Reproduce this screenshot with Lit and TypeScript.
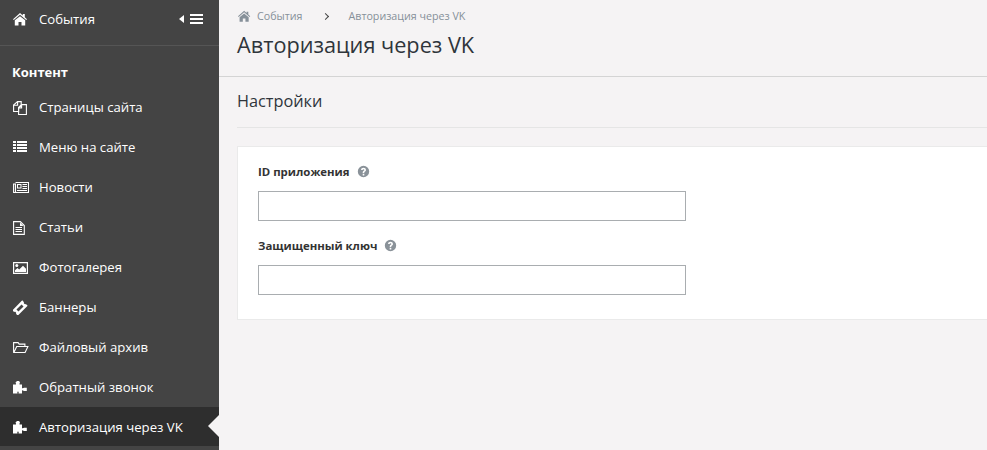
import { LitElement, html, css, svg } from "lit";
import { customElement } from "lit/decorators.js";

const home = svg`<path d="M7 2 0 8.200l.8.9L7 3.800l6.200 5.300.8-.9-2.200-1.900V3H9.800v1.500zM1.800 9.300V14.500h3.700v-3.600h3v3.600h3.700V9.300L7 5.200z"/>`;
const pages = svg`<g fill="none" stroke="currentColor" stroke-width="1.100"><path d="M.6 12.500V6L4.500 2.600h3.700v3.300L5.600 8.500v4z"/><path d="M5.600 8.700 8.800 5.600h4.600v9.900H5.600zM8.600 5.800v3.100H5.800M4.600 2.800v3.500H.8"/></g>`;
const list = svg`<path d="M0 2h3v2H0zM4 2h10v2H4zM0 5h3v2H0zM4 5h10v2H4zM0 8h3v2H0zM4 8h10v2H4zM0 11h3v2H0zM4 11h10v2H4z"/>`;
const news = svg`<g fill="none" stroke="currentColor" stroke-width="1.100"><path d="M2.500 3.500h13v10h-14.900V5h1.900v8"/></g><path fill-rule="evenodd" d="M4 5h4.500v4.500H4zM5 6v2.500h2.500V6z"/><path d="M9.500 5H14v1H9.500zM9.500 7H14v1H9.500zM9.500 9H14v1H9.500zM4 11h10v1H4z"/>`;
const doc = svg`<path fill="none" stroke="currentColor" stroke-width="1.100" d="M.6 2.600h6.700l4 4v8.800H.6z"/><path d="M7 3.500V7h3.500z"/><path d="M2.500 8h6.500v1H2.500zM2.500 10h6.500v1H2.500zM2.500 12h6.500v1H2.500z"/>`;
const pic = svg`<path fill="none" stroke="currentColor" stroke-width="1.200" d="M.6 3.600h13.800v10.800H.6z"/><circle cx="3.800" cy="6.500" r="1.500"/><path d="M2 13v-1.800l2.500-2.200 1.700 1.600L10 6.800l3 3V13z"/>`;
const tag = svg`<g transform="rotate(-45 7 9)"><path fill-rule="evenodd" d="M0 5.200h14v2.500c-.6 0-1 .6-1 1.300s.4 1.300 1 1.300v2.500H0v-2.500c.6 0 1-.6 1-1.300S.6 7.700 0 7.700zM3.400 7.600v2.800h7.200V7.600z"/></g>`;
const folder = svg`<path fill="none" stroke="currentColor" stroke-width="1.100" d="M.6 13.500V3.600h4.500l1.100 1.500h5.700v2.200M.9 13.500l2.800-6h11.200l-2.800 6z"/>`;
const puzzle = svg`<path d="M5 2c1.100 0 1.900.6 1.900 1.400 0 .7-.5 1-.5 1.500 0 .3.200.6.800.6H9v3.600c.2.300.5.300.8.100.4-.3.800-.5 1.300-.5h2.700V12h-2.700c-.5 0-.9-.2-1.300-.5-.3-.2-.6-.2-.8.100v2.900H5.500c.1-.5.200-.9.200-1.200 0-.4-.3-.7-.7-.7s-.7.3-.7.700c0 .3.100.7.200 1.200H0V5.500h2.300c.6 0 .8-.3.800-.6 0-.5-.5-.8-.5-1.500C3.100 2.600 3.900 2 5 2z"/>`;
const ico = (p: unknown) => html`<svg class="ico" viewBox="0 0 16 16" aria-hidden="true">${p}</svg>`;

const items: [string, unknown][] = [
  ["Страницы сайта", pages],
  ["Меню на сайте", list],
  ["Новости", news],
  ["Статьи", doc],
  ["Фотогалерея", pic],
  ["Баннеры", tag],
  ["Файловый архив", folder],
  ["Обратный звонок", puzzle],
  ["Авторизация через VK", puzzle],
];

@customElement("app-root")
export class AppRoot extends LitElement {
  static styles = css`
    :host {
      display: flex;
      width: 987px;
      height: 450px;
      overflow: hidden;
      background: #f5f3f4;
      font-family: "Open Sans", sans-serif;
      color: #333;
    }
    .side {
      width: 219px;
      flex: none;
      background: #444;
      color: #fff;
      font-size: 13.150px;
    }
    .top {
      box-sizing: content-box;
      height: 38px;
      padding: 0 16px 7px 13px;
      display: flex;
      align-items: center;
      border-bottom: 1px solid #555;
    }
    .ico {
      width: 16px;
      height: 16px;
      flex: none;
      fill: currentColor;
      margin-right: 10px;
    }
    .grow {
      flex: 1;
    }
    .toggle {
      display: flex;
      align-items: center;
      gap: 6px;
    }
    .tri {
      width: 0;
      height: 0;
      border-style: solid;
      border-width: 4.500px 5px 4.500px 0;
      border-color: transparent #fff transparent transparent;
    }
    .bars {
      width: 13px;
      height: 10px;
      border-top: 2px solid #fff;
      border-bottom: 2px solid #fff;
      position: relative;
      box-sizing: border-box;
    }
    .bars::after {
      content: "";
      position: absolute;
      left: 0;
      right: 0;
      top: 2px;
      height: 2px;
      background: #fff;
    }
    .group {
      font-size: 13px;
      font-weight: 700;
      height: 20px;
      line-height: 20px;
      margin: 16px 0 5px;
      padding-left: 12px;
    }
    .item {
      height: 40px;
      box-sizing: border-box;
      padding-left: 13px;
      display: flex;
      align-items: center;
      position: relative;
    }
    .item.active {
      background: #2e2e2e;
      height: 39px;
    }
    .item.active::after {
      content: "";
      position: absolute;
      right: 0;
      top: 8px;
      border-style: solid;
      border-width: 11px 11px 11px 0;
      border-color: transparent #f5f3f4 transparent transparent;
    }
    .main {
      flex: 1;
      min-width: 0;
    }
    .head {
      height: 77px;
      box-sizing: border-box;
      padding: 8px 18px 0;
      border-bottom: 1px solid #d4d4d4;
    }
    .crumbs {
      display: flex;
      align-items: center;
      height: 16px;
      font-size: 10.700px;
      color: #869099;
    }
    .crumbs .ico {
      width: 14px;
      height: 14px;
      margin: 0 5px 0 1px;
    }
    .sep {
      margin: 0 20px 0 21px;
      width: 4px;
      height: 4px;
      border-top: 1.500px solid #444;
      border-right: 1.500px solid #444;
      transform: rotate(45deg);
    }
    h1 {
      margin: 4px 0 0;
      font-size: 21.700px;
      font-weight: 400;
      line-height: 34px;
      color: #2f353b;
    }
    .body {
      padding: 0 0 0 18px;
    }
    h2 {
      margin: 0;
      height: 50px;
      line-height: 49px;
      font-size: 16.300px;
      font-weight: 400;
      color: #2f353b;
      border-bottom: 1px solid #e5e5e5;
    }
    .card {
      margin-top: 18px;
      height: 174px;
      box-sizing: border-box;
      background: #fff;
      border: 1px solid #eaeaea;
      border-right: 0;
      padding: 14px 20px 0;
    }
    .label {
      display: flex;
      align-items: center;
      height: 20px;
      font-size: 11.400px;
      font-weight: 700;
      color: #333;
      margin-bottom: 10px;
    }
    .q {
      width: 13px;
      height: 13px;
      margin-left: 7px;
      fill: #8a9299;
      flex: none;
    }
    input {
      display: block;
      width: 428px;
      height: 30px;
      box-sizing: border-box;
      border: 1px solid #a9adb0;
      background: #fff;
      margin: 0 0 14px;
      padding: 0;
    }
  `;

  render() {
    const q = html`<svg class="q" viewBox="0 0 16 16" aria-hidden="true"><path fill-rule="evenodd" d="M8 1a7 7 0 1 0 0 14A7 7 0 0 0 8 1zM7 11h2v2H7zM5 6.200C5 4.500 6.300 3.500 8 3.500s3 1 3 2.600c0 1.200-.7 1.700-1.400 2.200-.4.300-.6.500-.6 1V10H7v-.9c0-1 .5-1.500 1.200-2 .5-.3.800-.6.800-1 0-.5-.4-.8-1-.8s-1 .4-1.100 1z"/></svg>`;
    return html`
      <aside class="side">
        <div class="top">
          ${ico(home)}<span class="grow">События</span>
          <span class="toggle"><span class="tri"></span><span class="bars"></span></span>
        </div>
        <div class="group">Контент</div>
        ${items.map(
          ([t, p], i) => html`<div class="item ${i === items.length - 1 ? "active" : ""}">${ico(p)}<span>${t}</span></div>`
        )}
      </aside>
      <main class="main">
        <header class="head">
          <div class="crumbs">
            ${ico(home)}<span>События</span><span class="sep"></span><span>Авторизация через VK</span>
          </div>
          <h1>Авторизация через VK</h1>
        </header>
        <section class="body">
          <h2>Настройки</h2>
          <div class="card">
            <div class="label">ID приложения${q}</div>
            <input type="text" />
            <div class="label">Защищенный ключ${q}</div>
            <input type="text" />
          </div>
        </section>
      </main>
    `;
  }
}
